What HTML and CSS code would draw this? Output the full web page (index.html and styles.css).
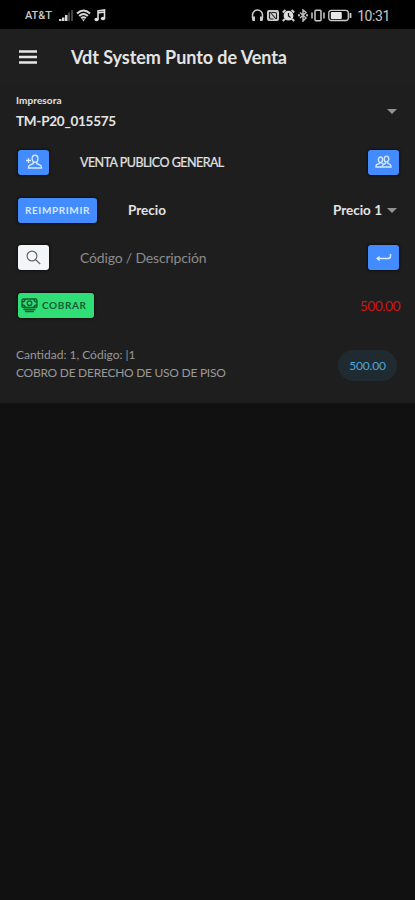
FILE: index.html
```html
<!DOCTYPE html>
<html lang="es">
<head>
    <meta charset="UTF-8">
    <meta name="viewport" content="width=device-width, initial-scale=1.0">
    <title>Vdt System Punto de Venta</title>
    <link rel="stylesheet" href="styles.css">
</head>
<body>
    <div class="status-bar">
        <div class="status-left">
            <span class="carrier">AT&amp;T</span>
            <svg class="signal" width="14" height="13" viewBox="0 0 14 13">
                <path d="M0 10h2.500v2H0zM3 8.500h2.500V12H3zM6 6h2.500v6H6z" fill="#d8d8d8"/>
                <path d="M9 3.500h2V12H9zM12 1h2v11h-2z" fill="#444"/>
            </svg>
            <svg class="wifi" width="15" height="13" viewBox="0 0 15 13" fill="none" stroke="#d8d8d8" stroke-width="2">
                <path d="M1 4.500Q7.500-1.500 14 4.500M3.200 7Q7.500 3 11.800 7M5.200 9.300Q7.500 7.300 9.800 9.300"/>
                <path d="M6 10.200h3L7.500 12.500z" fill="#d8d8d8" stroke="none"/>
            </svg>
            <svg width="12" height="13" viewBox="0 0 12 13">
                <path d="M4 10V2l6.500-1v8M4 4l6.500-1" fill="none" stroke="#ddd" stroke-width="1.600"/>
                <ellipse cx="2.600" cy="10.500" rx="2.200" ry="1.800" fill="#ddd"/>
                <ellipse cx="9" cy="9.500" rx="2.200" ry="1.800" fill="#ddd"/>
            </svg>
        </div>
        <div class="status-right">
            <svg width="13" height="13" viewBox="0 0 13 13">
                <path d="M1.500 9V6a5 5 0 0 1 10 0v3" fill="none" stroke="#ccc" stroke-width="1.500"/>
                <path d="M1 7.500h3V12H2.500Q1 12 1 10.500zM9 7.500h3v3Q12 12 10.500 12H9z" fill="#ccc"/>
            </svg>
            <svg width="12" height="13" viewBox="0 0 12 13">
                <rect y="1" width="12" height="11" rx="2" fill="#ccc"/>
                <path d="M2.500 3v5.500q0 1.500 1.500 1.500h2.500M4.500 3.500H8q1.500 0 1.500 1.500v5M3 3l6 7" fill="none" stroke="#222" stroke-width="1.100"/>
            </svg>
            <svg width="13" height="13" viewBox="0 0 13 13">
                <circle cx="6.500" cy="6.700" r="4.900" fill="#ddd"/>
                <path d="M.8 3.500L3.500 1M12.200 3.500L9.500 1M2.800 10l-2 2M10.200 10l2 2" stroke="#ccc" stroke-width="2"/>
                <path d="M6.500 4v3l2 1.500" fill="none" stroke="#111" stroke-width="1.200"/>
            </svg>
            <svg width="10" height="13" viewBox="0 0 10 13" fill="none" stroke="#bbb" stroke-width="1.500">
                <path d="M2 3.500l6 5.500-3 3V1l3 2.500L2 9"/>
                <path d="M0 6.300h2M8 6.300h2" stroke-width="2"/>
            </svg>
            <svg width="14" height="13" viewBox="0 0 14 13" fill="none" stroke="#ccc" stroke-width="1.500">
                <rect x="4" y="1.200" width="6" height="10.500" rx="1"/>
                <path d="M1 3.500v6M13 3.500v6"/>
            </svg>
            <svg class="battery" width="24" height="13" viewBox="0 0 24 13">
                <rect x=".8" y="1.300" width="19.500" height="10.200" rx="2.500" fill="none" stroke="#ccc" stroke-width="1.300"/>
                <rect x="2.800" y="3" width="11" height="7" rx="1" fill="#e8e8e8"/>
                <path d="M22.500 4v5" stroke="#ccc" stroke-width="1.800"/>
            </svg>
            <span class="clock">10:31</span>
        </div>
    </div>

    <header class="toolbar">
        <svg class="menu" width="18" height="14" viewBox="0 0 18 14">
            <path d="M0 1.500h18M0 7h18M0 12.500h18" stroke="#e6e6e6" stroke-width="2.600"/>
        </svg>
        <h1 class="title">Vdt System Punto de Venta</h1>
    </header>

    <main class="list">
        <div class="item printer">
            <div>
                <div class="label">Impresora</div>
                <div class="printer-name">TM-P20_015575</div>
            </div>
            <span class="caret"></span>
        </div>

        <div class="item">
            <button class="btn primary">
                <svg width="18" height="16" viewBox="0 0 18 16" fill="none" stroke="#d6e7ff" stroke-width="1.400">
                    <ellipse cx="10" cy="4.800" rx="2.900" ry="3.500"/>
                    <path d="M8.300 8v1.500L4.500 11.300Q3.500 12 3.500 14h13q0-2-1-2.700L11.700 9.500V8M1 6.500h5M3.500 4v5"/>
                </svg>
            </button>
            <span class="customer">VENTA PUBLICO GENERAL</span>
            <button class="btn primary end">
                <svg width="17" height="14" viewBox="0 0 17 14" fill="none" stroke="#d6e7ff" stroke-width="1.400">
                    <ellipse cx="5.500" cy="4.700" rx="2.100" ry="2.700"/>
                    <ellipse cx="11.500" cy="4" rx="2.300" ry="2.900"/>
                    <path d="M4.800 7.300v1L1.500 9.700Q1 10.300 1 12h6.500M6 7.500L8.300 9M10.500 6.700v1.600L8 9.800q-.8.600-.8 2.200H16q0-1.700-.8-2.300l-2.600-1.400V6.700"/>
                </svg>
            </button>
        </div>

        <div class="item">
            <button class="btn primary reprint">REIMPRIMIR</button>
            <span class="price-label">Precio</span>
            <span class="price-value">Precio 1</span>
            <span class="caret"></span>
        </div>

        <div class="item search">
            <button class="btn light">
                <svg width="15" height="15" viewBox="0 0 15 15" fill="none" stroke="#666" stroke-width="1.200">
                    <circle cx="6" cy="6" r="4.900"/>
                    <path d="M9.700 9.700l4.500 4.300"/>
                </svg>
            </button>
            <span class="placeholder">Código / Descripción</span>
            <button class="btn primary end">
                <svg width="16" height="10" viewBox="0 0 16 10" fill="none" stroke="#dce9ff" stroke-width="1.500" stroke-linecap="round">
                    <path d="M14.500 1.500v1.800q0 2.200-2.300 2.200H2"/>
                    <path d="M1 5.500L3 4v3z" fill="#dce9ff" stroke-width="1.200"/>
                </svg>
            </button>
        </div>

        <div class="item pay">
            <button class="btn success">
                <svg width="17" height="15" viewBox="0 0 17 15" fill="none" stroke="#185c34" stroke-width="1.400">
                    <rect x="1" y="1" width="15" height="8.500" rx="1.500"/>
                    <circle cx="8.500" cy="5.200" r="2.300"/>
                    <path d="M1 4q3 0 3-3M16 4q-3 0-3-3M1 7q3 0 3 2.500M16 7q-3 0-3 2.500M2.500 11.500h12M4 13.500h9"/>
                </svg>
                <span class="pay-text">COBRAR</span>
            </button>
            <span class="total">500.00</span>
        </div>

        <div class="item product">
            <div class="detail">
                <div class="quantity">Cantidad: 1, Código: |1</div>
                <div class="description">COBRO DE DERECHO DE USO DE PISO</div>
            </div>
            <span class="chip">500.00</span>
        </div>
    </main>
</body>
</html>
```
FILE: styles.css
```css
* {
    box-sizing: border-box;
}

body {
    margin: 0;
    min-height: 900px;
    background: #111;
    color: #e4e4e4;
    font-family: Lato, "Open Sans", sans-serif;
    font-size: 13px;
}

svg {
    display: block;
    flex: none;
}

.status-bar {
    display: flex;
    justify-content: space-between;
    align-items: center;
    height: 29px;
    padding: 2px 25px 0;
    background: #000;
    color: #c8c8c8;
}

.status-left,
.status-right {
    display: flex;
    align-items: center;
}

.status-right {
    gap: 3px;
}

.carrier {
    width: 34px;
    font: 500 11px Roboto, sans-serif;
}

.wifi {
    margin: 0 3px;
}

.clock {
    margin-left: 2px;
    font: 14px Roboto, sans-serif;
    letter-spacing: -0.4px;
}

.toolbar {
    display: flex;
    align-items: center;
    height: 55px;
    padding: 1px 19px 0;
    background: #1f1f1f;
}

.title {
    margin: 0 0 0 34px;
    font-size: 18px;
    font-weight: 700;
    letter-spacing: -0.06px;
    white-space: nowrap;
}

.list {
    height: 319px;
    background: #1e1e1e;
}

.item {
    display: flex;
    align-items: center;
    height: 48px;
    padding: 0 16px 0 18px;
    white-space: nowrap;
}

.printer {
    height: 54px;
    padding: 1px 18px 0 16px;
    justify-content: space-between;
}

.label {
    font-size: 10px;
    line-height: 14px;
    font-weight: 700;
    letter-spacing: 0.1px;
}

.printer-name {
    margin-top: 4px;
    font-size: 13.500px;
    line-height: 20px;
    font-weight: 700;
    letter-spacing: -0.25px;
}

.caret {
    border: 5px solid transparent;
    border-top-color: #929292;
    border-bottom: 0;
}

.btn {
    display: flex;
    align-items: center;
    justify-content: center;
    flex: none;
    width: 31px;
    height: 25px;
    padding: 0;
    border: 0;
    border-radius: 3px;
    box-shadow: 0 0 2px 1px #111;
    font-family: inherit;
}

.primary {
    background: #428cff;
    color: #d6e7ff;
}

.light {
    background: #f4f5f8;
}

.success {
    width: 76px;
    padding-left: 3px;
    justify-content: flex-start;
    background: #2fdf75;
    color: #185c34;
    gap: 4px;
}

.end {
    margin-left: auto;
}

.customer,
.placeholder {
    margin-left: 31px;
}

.customer {
    font-size: 12.500px;
    letter-spacing: -0.53px;
    -webkit-text-stroke: 0.2px;
}

.reprint {
    width: 79px;
    font-size: 10px;
    font-weight: 700;
    letter-spacing: 0.6px;
}

.price-label {
    margin-left: 31px;
    font-size: 13.500px;
    font-weight: 700;
}

.price-value {
    margin: 0 5px 0 auto;
    font-size: 13.500px;
    font-weight: 700;
}

.price-value + .caret {
    margin-right: 2px;
}

.search,
.pay {
    height: 47.500px;
}

.placeholder {
    color: #8c8c8c;
    font-size: 14px;
    letter-spacing: -0.17px;
}

.pay-text {
    font-size: 10px;
    font-weight: 700;
    letter-spacing: 0.6px;
}

.total {
    margin: 0 -1px 0 auto;
    color: #d01414;
    font-size: 14px;
    letter-spacing: -0.6px;
}

.product {
    height: 73px;
    padding: 0 18px 3px 16px;
    justify-content: space-between;
}

.detail {
    color: #999;
    font-size: 12px;
    line-height: 18px;
}

.description {
    letter-spacing: -0.26px;
}

.chip {
    width: 59px;
    height: 31px;
    margin-top: 2px;
    border-radius: 16px;
    background: #1f2b30;
    color: #50a7d8;
    font-size: 12px;
    line-height: 31px;
    text-align: center;
    letter-spacing: -0.2px;
}
```
